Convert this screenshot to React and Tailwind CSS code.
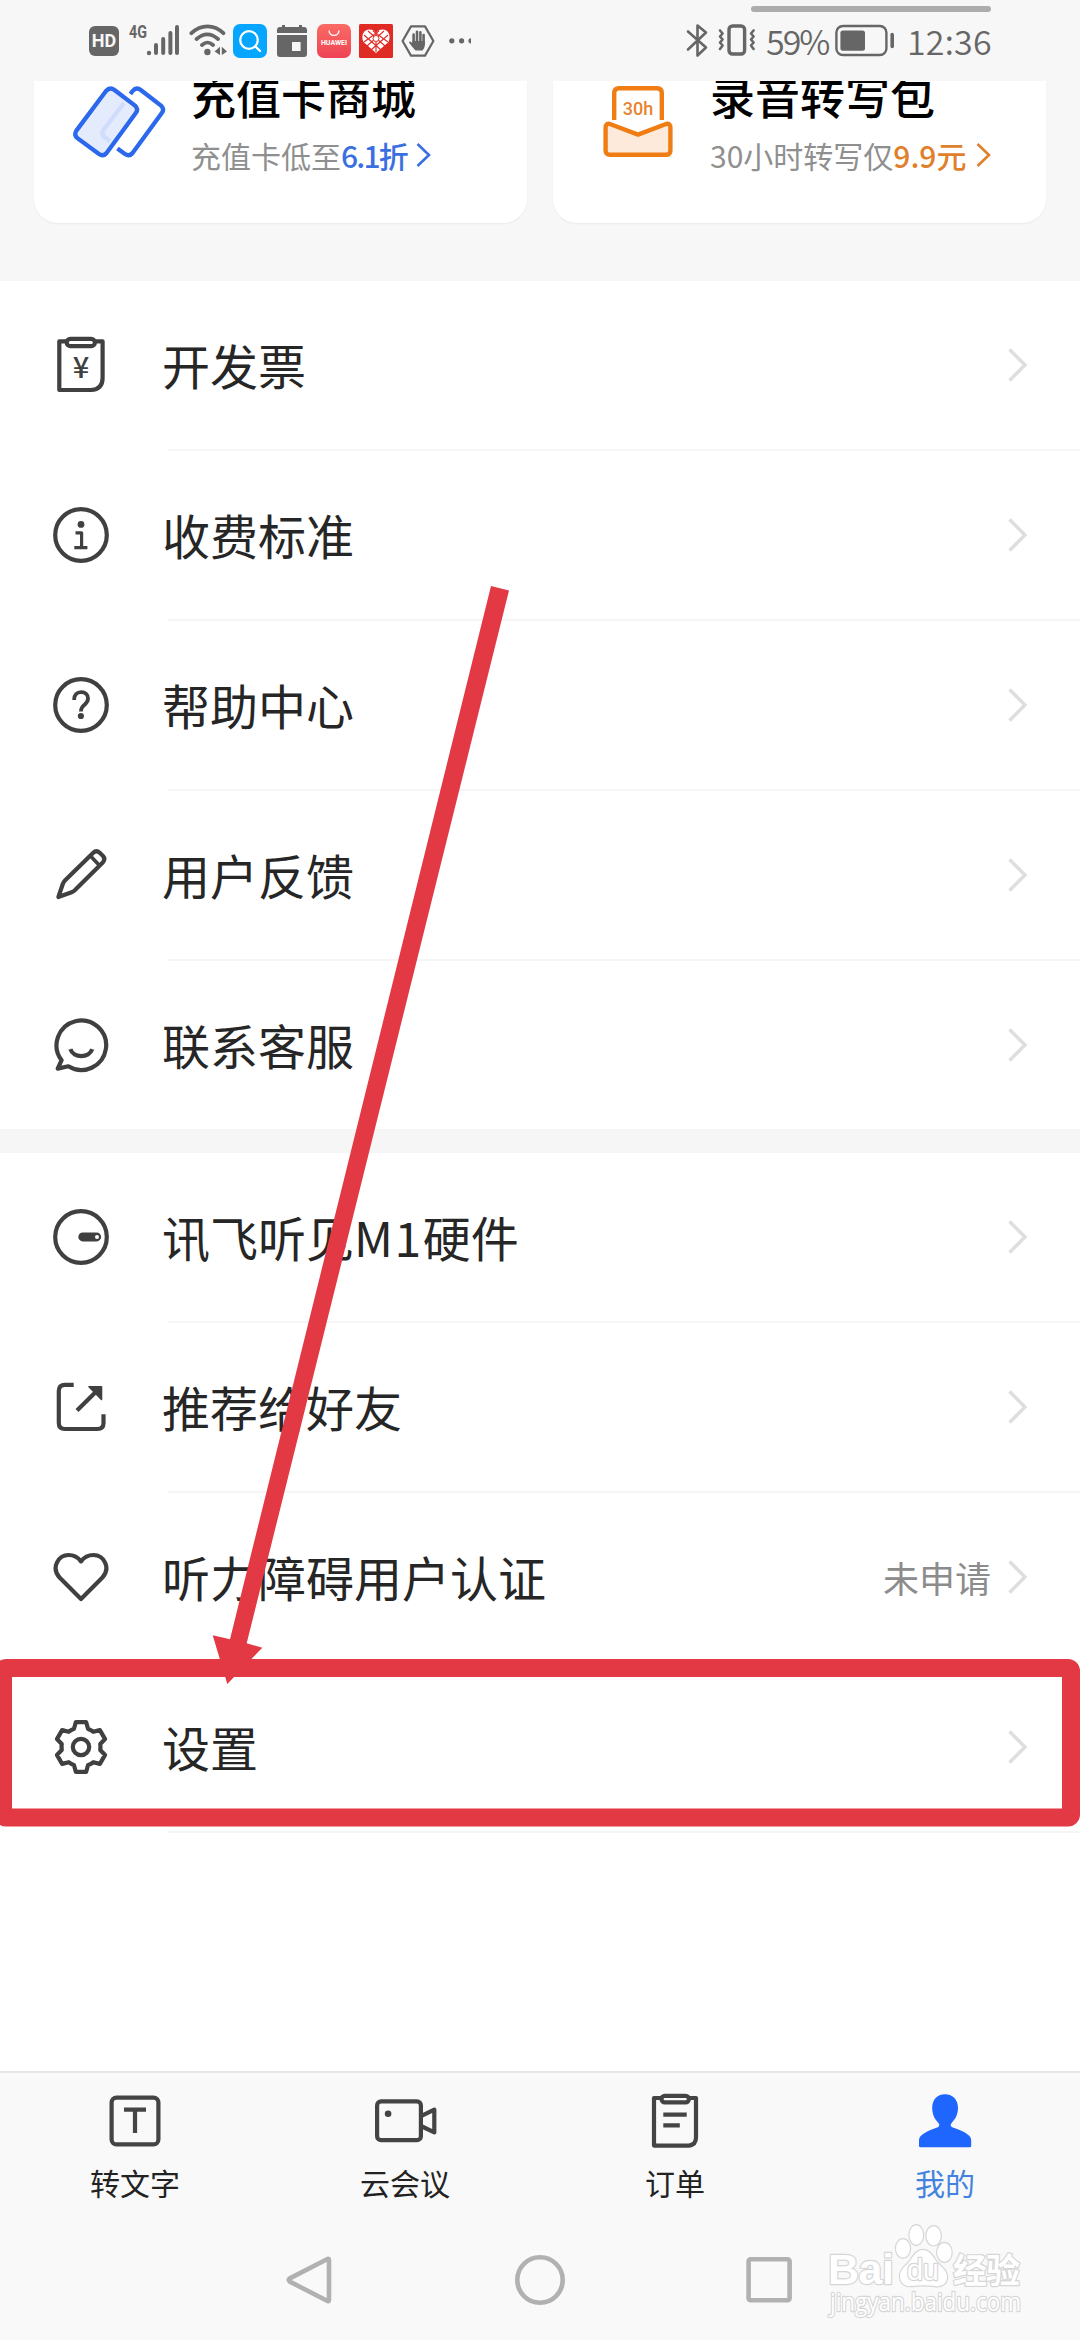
const menuGroups = [
  [
    { label: "开发票", icon: InvoiceIcon },
    { label: "收费标准", icon: InfoIcon },
    { label: "帮助中心", icon: HelpIcon },
    { label: "用户反馈", icon: PencilIcon },
    { label: "联系客服", icon: ServiceIcon },
  ],
  [
    {
      label: (
        <>
          讯飞听见<span className="tracking-[1.6px]">M1</span>硬件
        </>
      ),
      icon: DeviceIcon,
    },
    { label: "推荐给好友", icon: ShareIcon },
    { label: "听力障碍用户认证", icon: HeartIcon, note: "未申请" },
    { label: "设置", icon: GearIcon },
  ],
];

const tabs = [
  { label: "转文字", icon: TextTabIcon },
  { label: "云会议", icon: MeetingTabIcon },
  { label: "订单", icon: OrderTabIcon },
  { label: "我的", icon: MineTabIcon, active: true },
];

function LineIcon({ children }) {
  return (
    <svg
      width="60"
      height="60"
      viewBox="0 0 60 60"
      fill="none"
      stroke="#404040"
      strokeWidth="4.2"
      strokeLinejoin="round"
      className="shrink-0"
    >
      {children}
    </svg>
  );
}

function InvoiceIcon() {
  return (
    <LineIcon>
      <path d="M15 6.4H8.3V55H40Q51.6 54.5 51.6 43V6.4H45" />
      <rect x="15.7" y="3.9" width="28.2" height="7.2" rx="3.6" />
      <text
        x="30"
        y="43"
        textAnchor="middle"
        fontSize="29"
        fontWeight="500"
        fill="#404040"
        stroke="none"
      >
        ¥
      </text>
    </LineIcon>
  );
}

function InfoIcon() {
  return (
    <LineIcon>
      <circle cx="30" cy="30" r="25.8" />
      <circle cx="30" cy="19.4" r="3.4" fill="#404040" stroke="none" />
      <path d="M24.5 27.8H30.6V42.6M23.3 42.6H36.4" strokeWidth="3.2" />
    </LineIcon>
  );
}

function HelpIcon() {
  return (
    <LineIcon>
      <circle cx="30" cy="30" r="25.8" />
      <path
        d="M23.1 25C23.1 19.8 26 17.2 30.2 17.2C34.4 17.2 37 19.8 37 23.6C37 27 35 28.5 33 30.2C31 32 29.9 33.5 29.9 36.6"
        strokeWidth="3.8"
      />
      <circle cx="29.9" cy="41" r="3.1" fill="#404040" stroke="none" />
    </LineIcon>
  );
}

function PencilIcon() {
  return (
    <LineIcon>
      <path d="M7.4 52L11.6 39.5Q12.4 37 14.2 35.2L42 8Q45.3 4.8 48.5 7.6L52 11Q54.7 14 52 17.2L24.5 44.6Q23 46.2 20.6 47.2Z" />
      <path d="M39.5 11L48.5 20.5" strokeWidth="3.6" />
    </LineIcon>
  );
}

function ServiceIcon() {
  return (
    <LineIcon>
      <path d="M6.7 53.6L10.6 45.2A24.8 24.8 0 1 1 17.3 51.3Z" />
      <path d="M19.4 34.2C22.4 43.4 38.2 43.4 41.2 34.2" />
    </LineIcon>
  );
}

function DeviceIcon() {
  return (
    <LineIcon>
      <circle cx="30" cy="30" r="25.8" />
      <rect x="27.3" y="25.4" width="22.8" height="9" rx="4.5" fill="#404040" stroke="none" />
      <circle cx="46" cy="29.9" r="2" fill="#fff" stroke="none" />
    </LineIcon>
  );
}

function ShareIcon() {
  return (
    <LineIcon>
      <path d="M22.7 7.8H14Q7.8 7.8 7.8 14V46Q7.8 52 14 52H46.4Q52.5 52 52.5 46V37.3" />
      <path d="M26 33.6L44 15.8" />
      <path d="M38 9.8H50.5V22.5Z" fill="#404040" strokeWidth="1.6" />
    </LineIcon>
  );
}

function HeartIcon() {
  return (
    <LineIcon>
      <path d="M30 52L8.8 30.8C-0.5 20.5 7.5 8 17.6 8C23 8 27 10.3 30 14.4C33 10.3 37 8 42.4 8C52.5 8 60.5 20.5 51.2 30.8Z" />
    </LineIcon>
  );
}

// one tooth, turned six times round the centre
const gearTooth = [
  [-7, -18.2],
  [-5.2, -24.8],
  [5.2, -24.8],
  [7, -18.2],
  [10.2, -16.6],
];
const gearPoints = [0, 60, 120, 180, 240, 300]
  .flatMap((deg) => {
    const a = (deg * Math.PI) / 180;
    return gearTooth.map(([x, y]) => [
      30 + x * Math.cos(a) - y * Math.sin(a),
      30 + x * Math.sin(a) + y * Math.cos(a),
    ]);
  })
  .map((p) => p.map((n) => n.toFixed(2)).join(","))
  .join(" ");

function GearIcon() {
  return (
    <LineIcon>
      <polygon points={gearPoints} />
      <circle cx="30" cy="30" r="8.2" />
    </LineIcon>
  );
}

function TabIcon({ children }) {
  return (
    <svg
      width="64"
      height="64"
      viewBox="0 0 64 64"
      fill="none"
      stroke="#444"
      strokeWidth="4.2"
      strokeLinejoin="round"
    >
      {children}
    </svg>
  );
}

function TextTabIcon() {
  return (
    <TabIcon>
      <rect x="8.6" y="8.6" width="46.8" height="46.8" rx="5" />
      <path d="M21 20.6H43M32 20.6V44" />
    </TabIcon>
  );
}

function MeetingTabIcon() {
  return (
    <TabIcon>
      <rect x="4.1" y="12.4" width="43.8" height="38.8" rx="4" />
      <path d="M48 27.2L61.3 20.6V43.4L48 37" />
      <circle cx="15.1" cy="24.7" r="3.3" fill="#444" stroke="none" />
    </TabIcon>
  );
}

function OrderTabIcon() {
  return (
    <TabIcon>
      <path d="M18 9H11V56.6H46Q53 55.6 53 48.5V9H46" />
      <rect x="18.5" y="6.8" width="27.4" height="6.6" rx="3.3" />
      <path d="M20.3 25.6H43.7M20.3 36.4H36.8" />
    </TabIcon>
  );
}

function MineTabIcon() {
  return (
    <TabIcon>
      <path
        d="M32 5.3C40 5.3 45 11 45 19C45 25.5 42 30.5 38.6 34C37.2 35.6 37.6 37.6 39.2 38.2C47 40.6 53 43.6 56.3 46.8C57.8 48.4 58.2 50 58.2 52V56.8Q58.2 58.3 56.7 58.3H7.5Q6 58.3 6 56.8V52C6 50 6.4 48.4 7.9 46.8C11.2 43.6 17 40.6 24.8 38.2C26.4 37.6 26.8 35.6 25.4 34C22 30.5 19.2 25.5 19.2 19C19.2 11 24 5.3 32 5.3Z"
        fill="#1f66ff"
        stroke="none"
      />
    </TabIcon>
  );
}

const StatusBar = () => (
  <div className="relative flex h-[81px] items-start bg-[#f7f7f7] pt-6 pl-[89px] text-[#666]">
    <div className="mt-[2px] flex h-[30px] w-[30px] items-center justify-center rounded-[6px] bg-[#666] font-[Roboto] text-[18px] leading-none font-bold text-[#f7f7f7]">
      HD
    </div>
    <svg width="50" height="34" viewBox="0 0 50 34" className="ml-[10px] overflow-visible" fill="currentColor">
      <text x="0" y="14" fontFamily="Roboto" fontSize="18" fontWeight="700" textLength="18" lengthAdjust="spacingAndGlyphs">
        4G
      </text>
      <circle cx="20" cy="29" r="2.2" />
      <path d="M27 21V29M34.2 15V29M41.4 9V29M48 3V29" stroke="currentColor" strokeWidth="4" strokeLinecap="round" />
    </svg>
    <svg width="38" height="34" viewBox="0 0 38 34" className="ml-[10px]" fill="none" stroke="currentColor" strokeWidth="3.8" strokeLinecap="round">
      <path d="M2.4 9.2C12 0 25 0 34.4 9.2M7.6 15C14.5 9 22 9 29 15M13 21C17 17.6 20 17.6 24 21" />
      <circle cx="18.4" cy="28" r="3.2" fill="currentColor" stroke="none" />
      <path d="M31 22.8V31L25.6 27.5ZM32.8 22.8V31L38 27.5Z" fill="currentColor" stroke="none" />
    </svg>
    <div className="ml-[6px] flex h-[34px] w-[34px] items-center justify-center rounded-[7px] bg-[#06a5ff]">
      <svg width="24" height="24" viewBox="0 0 24 24" fill="none" stroke="#fff" strokeWidth="2.3" strokeLinecap="round">
        <circle cx="11" cy="11" r="8.8" />
        <path d="M17.4 17.4L22 22" />
      </svg>
    </div>
    <svg width="30" height="34" viewBox="0 0 30 34" className="ml-[10px]" fill="currentColor">
      <path d="M0 9V6Q0 3 3 3H5V1H8V3H22V1H25V3H27Q30 3 30 6V9Z" />
      <path d="M0 11H30V30Q30 33 27 33H3Q0 33 0 30ZM15 18V27H23.6V18Z" fillRule="evenodd" />
    </svg>
    <div className="ml-[10px] flex h-[34px] w-[34px] flex-col items-center rounded-[7px] bg-gradient-to-b from-[#fb6a64] to-[#ee4255]">
      <svg width="12" height="7" viewBox="0 0 12 7" className="mt-[6px]" fill="none" stroke="#fff" strokeWidth="1.3">
        <path d="M1 0.5C1.5 7 10.5 7 11 0.5" />
      </svg>
      <span className="mt-[2px] font-[Roboto] text-[7px] leading-[9px] font-bold text-white">HUAWEI</span>
    </div>
    <svg width="34" height="34" viewBox="0 0 34 34" className="ml-2">
      <rect width="34" height="34" rx="1.5" fill="#e02a24" />
      <path d="M17 29L4.5 18C1.5 11 5 5.5 10.5 5.5C13.5 5.5 15.5 7 17 9C18.5 7 20.5 5.5 23.5 5.5C29 5.5 32.5 11 29.5 18Z" fill="#fff" />
      <path d="M5 11L22 26M9 7L26 22M14 7L29 18M29 11L12 26M25 7L8 22M20 7L5 18M17 9V28" stroke="#e02a24" strokeWidth="1.1" />
      <circle cx="17" cy="14.5" r="3" fill="#fff" stroke="#e02a24" />
    </svg>
    <svg width="34" height="34" viewBox="0 0 34 34" className="ml-2" fill="none" stroke="currentColor">
      <path d="M10 2.4H24L32.4 17L24 31.6H10L1.6 17Z" strokeWidth="2.2" strokeLinejoin="round" />
      <path d="M12.6 20V10.5M16 18V7.8M19.4 18V8.2M22.6 20V11" strokeWidth="2.6" strokeLinecap="round" />
      <path d="M11.3 17H23.9V21Q23.5 25 21.5 26.5H14.5Q12 24 8 18.5Q8.5 17 10 18L11.3 19Z" fill="currentColor" stroke="none" />
    </svg>
    <svg width="26" height="34" viewBox="0 0 26 34" className="ml-[14px]" fill="currentColor">
      <circle cx="2.8" cy="16.8" r="2.6" />
      <circle cx="12.6" cy="16.8" r="2.6" />
      <path d="M22 14.2V19.4A2.6 2.6 0 0 1 22 14.2Z" />
    </svg>
    <svg width="24" height="36" viewBox="0 0 24 36" className="-mt-px ml-[211px]" fill="none" stroke="currentColor" strokeWidth="2.6" strokeLinecap="round" strokeLinejoin="round">
      <path d="M2 8.5L20 24.5L11.5 32.5V2.5L20 9.5L2 26.5" />
    </svg>
    <svg width="38" height="34" viewBox="0 0 38 34" className="ml-2" fill="none" stroke="currentColor" strokeLinecap="round" strokeLinejoin="round">
      <rect x="11" y="2" width="15.6" height="28" rx="3.5" strokeWidth="3.4" />
      <path d="M2 6.5L4.6 9.5L2 12.5L4.6 15.5L2 18.5L4.6 21.5L2 25M35.6 6.5L33 9.5L35.6 12.5L33 15.5L35.6 18.5L33 21.5L35.6 25" strokeWidth="2.6" />
    </svg>
    <span className="ml-[10px] w-[70px] text-[34px] leading-[34px] font-[350] tracking-[-2px]">59%</span>
    <svg width="60" height="34" viewBox="0 0 60 34" fill="none" stroke="currentColor" className="-ml-px">
      <rect x="1.4" y="2" width="50" height="29" rx="6.5" strokeWidth="2.4" />
      <rect x="5.4" y="6.4" width="24.6" height="20.4" rx="2.5" fill="currentColor" stroke="none" />
      <path d="M57.2 10.5V22.5" strokeWidth="3.6" strokeLinecap="round" />
    </svg>
    <span className="ml-[12px] text-[34px] leading-[34px] font-[350] tracking-[0.2px]">12:36</span>
    <div className="absolute top-[6px] left-[751px] h-[6px] w-60 rounded-full bg-[#acacac]" />
  </div>
);

const SmallChevron = () => (
  <svg width="16" height="26" viewBox="0 0 16 26" fill="none" stroke="currentColor" strokeWidth="2.6">
    <path d="M1.5 2L13 13L1.5 24" />
  </svg>
);

const PromoCards = () => (
  <div className="flex h-[200px] gap-[26px] overflow-hidden bg-[#f7f7f7] pl-[34px]">
    <div className="flex h-[142px] w-[493px] rounded-b-[24px] bg-white pl-9 shadow-[0_1px_2px_rgba(0,0,0,0.06)]">
      <svg width="100" height="84" viewBox="0 1 100 84" fill="none" stroke="#2b68ec" strokeWidth="4.3">
        <path d="M44.5 10L65 25.6Q68.8 29 65.8 33L36.6 73Q33.2 77 29 74L7.4 58.2Q3.6 54.8 6.4 50.6L36 11Q40 6.4 44.5 10Z" fill="#e3ebfd" />
        <path d="M54 23L33 50.5Q31 54 34 56.8L40 61" stroke="#cfdcfb" />
        <path d="M60.4 14L62.6 11Q66.4 6.4 70.8 10L91 25.6Q94.8 29 91.8 33L62.6 73Q59.2 77 55 74L47.4 68.5" />
      </svg>
      <div className="-mt-[7px] ml-[21px]">
        <div className="text-[45px] leading-[44px] font-medium text-black">充值卡商城</div>
        <div className="mt-[22px] flex items-center text-[30px] leading-[30px] text-[#8f8f8f]">
          充值卡低至
          <span className="mr-[9px] font-medium tracking-[-1.8px] text-[#3a6fe2]">6.1折</span>
          <span className="text-[#3a6fe2]">
            <SmallChevron />
          </span>
        </div>
      </div>
    </div>
    <div className="flex h-[142px] w-[493px] rounded-b-[24px] bg-white pl-[47px] shadow-[0_1px_2px_rgba(0,0,0,0.06)]">
      <svg width="76" height="84" viewBox="0 1 76 84" fill="none" stroke="#f07d14" strokeWidth="4.4" strokeLinejoin="round">
        <path d="M14.2 40V13Q14.2 8.2 19 8.2H57Q61.8 8.2 61.8 13V40" />
        <text x="38" y="35.4" textAnchor="middle" fontFamily="Roboto" fontSize="18" fontWeight="500" fill="#e5832f" stroke="none">
          30h
        </text>
        <path d="M5.6 48Q5.6 42.4 10.6 44.2L38 54.6L65.4 44.2Q70.4 42.4 70.4 48V70.4Q70.4 74.8 66 74.8H10Q5.6 74.8 5.6 70.4Z" fill="#feeadb" />
      </svg>
      <div className="-mt-[7px] ml-[34px]">
        <div className="text-[45px] leading-[44px] font-medium text-black">录音转写包</div>
        <div className="mt-[22px] flex items-center text-[30px] leading-[30px] text-[#8f8f8f]">
          30小时转写仅
          <span className="mr-[10px] font-medium text-[#e07f2c]">9.9元</span>
          <span className="text-[#e07f2c]">
            <SmallChevron />
          </span>
        </div>
      </div>
    </div>
  </div>
);

const MenuRow = ({ item }) => {
  const Icon = item.icon;
  return (
    <div className="flex h-[168px] items-center pr-[52px] pl-[51px]">
      <Icon />
      <span className="ml-[51px] flex-1 pb-[3px] text-[48px] leading-[60px] text-[#262626]">{item.label}</span>
      {item.note && <span className="mr-[17px] text-[36px] leading-[44px] text-[#8c8c8c]">{item.note}</span>}
      <svg width="20" height="36" viewBox="0 0 20 36" fill="none" stroke="#dedede" strokeWidth="3.4">
        <path d="M1.5 2.5L17 18L1.5 33.5" />
      </svg>
    </div>
  );
};

const TabBar = () => (
  <div className="grid h-[151px] grid-cols-4 border-t-2 border-[#e3e6ea] pt-4">
    {tabs.map(({ label, icon: Icon, active }) => (
      <div key={label} className="flex flex-col items-center">
        <Icon />
        <span className={`mt-[14px] text-[30px] leading-[30px] ${active ? "text-[#4383de]" : "text-[#222]"}`}>
          {label}
        </span>
      </div>
    ))}
  </div>
);

const SystemNav = () => (
  <div className="flex flex-1 justify-center gap-[180px] pt-[33px]">
    <svg width="50" height="50" viewBox="0 0 50 50" fill="none" stroke="#b1b1b1" strokeWidth="4.6" strokeLinejoin="round">
      <path d="M42 4.2Q44 3 44 5.2V44.8Q44 47 42 45.8L4.8 26.6Q2.6 25 4.8 23.4Z" />
    </svg>
    <svg width="50" height="50" viewBox="0 0 50 50" fill="none" stroke="#b1b1b1" strokeWidth="4.6">
      <circle cx="25" cy="25" r="22.7" />
    </svg>
    <svg width="50" height="50" viewBox="0 0 50 50" fill="none" stroke="#b1b1b1" strokeWidth="4.6">
      <rect x="3.6" y="4.2" width="41" height="41" rx="2" />
    </svg>
  </div>
);

const Watermark = () => (
  <svg
    width="200"
    height="100"
    viewBox="0 0 200 100"
    className="absolute top-[2220px] left-[826px]"
    fill="#fff"
    stroke="#d6d6d6"
    strokeWidth="2.4"
    paintOrder="stroke"
    strokeLinejoin="round"
  >
    <text x="2" y="64" fontFamily="Liberation Sans" fontSize="43" fontWeight="700" textLength="66">
      Bai
    </text>
    <ellipse cx="77" cy="28.4" rx="7" ry="9.2" />
    <ellipse cx="90.3" cy="15" rx="6.8" ry="9.8" />
    <ellipse cx="107.6" cy="15.8" rx="7.2" ry="9.6" />
    <ellipse cx="118.4" cy="32.4" rx="7.2" ry="9.4" />
    <path d="M97 30C103 30 106 35 110 41C115 47 121 50 121 57C121 64 115 67 109 66C101 65 94 65 86 66C79 67 74 63 74 56C74 49 80 46 84 41C88 35 91 30 97 30Z" />
    <text x="81" y="59.5" fontFamily="Liberation Sans" fontSize="29" fontWeight="400" textLength="32">
      du
    </text>
    <text x="127" y="62.5" fontSize="34" fontWeight="700" textLength="67">
      经验
    </text>
    <text x="4" y="91" fontFamily="Open Sans" fontSize="25" textLength="191" lengthAdjust="spacingAndGlyphs">
      jingyan.baidu.com
    </text>
  </svg>
);

// hand-drawn pointer to the settings row
const Annotation = () => (
  <svg width="1080" height="2340" viewBox="0 0 1080 2340" className="pointer-events-none absolute top-0 left-0">
    <rect x="3" y="1668" width="1068" height="149.5" rx="3" fill="none" stroke="#e33944" strokeWidth="18" strokeLinejoin="round" />
    <path d="M491 586L509 590.5L246.7 1643.3L262.3 1647.7L227.3 1684L212.7 1635.3L230 1639.3Z" fill="#e33944" />
  </svg>
);

export default function App() {
  return (
    <div className="relative flex h-[2340px] w-[1080px] flex-col overflow-hidden bg-white font-['Noto_Sans_CJK_SC',sans-serif]">
      <StatusBar />
      <PromoCards />
      <div className="flex flex-col gap-6 bg-[#f6f6f6]">
        {menuGroups.map((group, i) => (
          <div key={i} className="bg-white">
            {group.map((item, j) => (
              <div key={j}>
                {j > 0 && <div className="ml-[168px] h-[2px] bg-[#f5f5f5]" />}
                <MenuRow item={item} />
              </div>
            ))}
          </div>
        ))}
      </div>
      <div className="ml-[168px] h-[2px] shrink-0 bg-[#f5f5f5]" />
      <div className="mt-auto flex h-[269px] flex-col bg-[#f9f9f9]">
        <TabBar />
        <SystemNav />
      </div>
      <Watermark />
      <Annotation />
    </div>
  );
}
